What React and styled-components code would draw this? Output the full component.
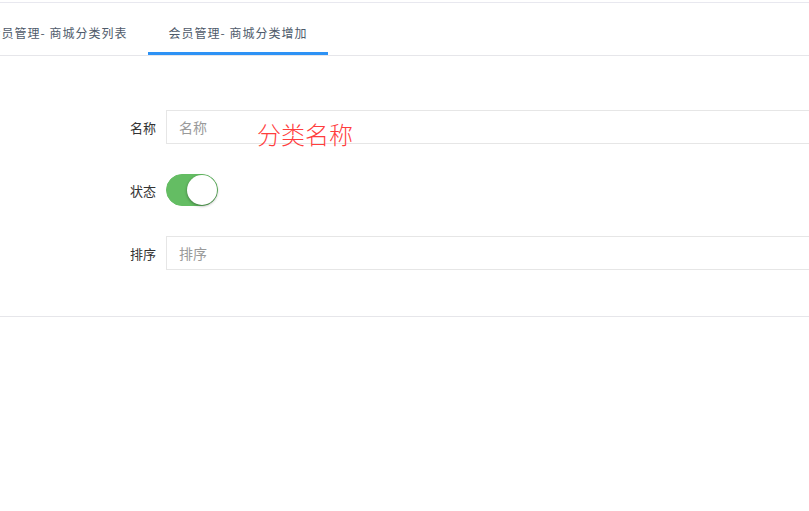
import React, { useState } from "react";
import styled, { createGlobalStyle } from "styled-components";

const Global = createGlobalStyle`
  html, body { margin: 0; padding: 0; background: #fff; overflow: hidden; }
  body { font-family: "Noto Sans CJK SC", "Noto Sans", sans-serif; }
  * { box-sizing: border-box; }
`;

const Page = styled.div`
  margin-top: 2px;
  border-top: 1px solid #e8e8ef;
  width: 809px;
`;

const TabBar = styled.div`
  display: flex;
  border-bottom: 1px solid #e6e6ea;
  margin-left: -32px;
`;

const Tab = styled.div`
  width: 180px;
  padding: 20px 0 9px;
  line-height: 20px;
  font-size: 12px;
  letter-spacing: 1px;
  color: #4e5a6a;
  text-align: center;
  white-space: nowrap;
  border-bottom: 3px solid ${(p) => (p.$active ? "#2d92f5" : "transparent")};
`;

const Panel = styled.div`
  display: flex;
  flex-direction: column;
  gap: 30px;
  padding: 54px 0 46px;
  border-bottom: 1px solid #e6e6ea;
`;

const Row = styled.div`
  position: relative;
  display: grid;
  grid-template-columns: 156px 1fr;
  column-gap: 10px;
  align-items: center;
`;

const Label = styled.label`
  text-align: right;
  font-size: 13px;
  color: #333;
`;

const Input = styled.input`
  width: calc(100% + 40px);
  height: 34px;
  border: 1px solid #e6e6e6;
  padding: 0 12px;
  font-size: 14px;
  font-family: "Noto Sans CJK SC", "Noto Sans", sans-serif;
  color: #333;
  outline: none;
  &::placeholder { color: #9a9a9a; }
`;

const Note = styled.span`
  position: absolute;
  left: 257px;
  top: 10px;
  font-size: 24px;
  line-height: 28px;
  color: #ff3d3d;
  font-weight: 300;
  pointer-events: none;
`;

const SwitchCell = styled.div`
  display: flex;
  align-items: center;
`;

const Switch = styled.button`
  position: relative;
  display: block;
  width: 52px;
  height: 32px;
  border-radius: 16px;
  border: 1px solid ${(p) => (p.$on ? "#64bd63" : "#dfdfdf")};
  background: ${(p) => (p.$on ? "#64bd63" : "#fff")};
  padding: 0;
  cursor: pointer;
`;

const Knob = styled.span`
  position: absolute;
  top: 0;
  left: ${(p) => (p.$on ? "20px" : "0")};
  width: 30px;
  height: 30px;
  border-radius: 50%;
  background: #fff;
  box-shadow: 0 1px 3px rgba(0, 0, 0, 0.4);
`;

export default function App() {
  const [on, setOn] = useState(true);
  return (
    <>
      <Global />
      <Page>
        <TabBar>
          <Tab>会员管理- 商城分类列表</Tab>
          <Tab $active>会员管理- 商城分类增加</Tab>
        </TabBar>
        <Panel>
          <Row>
            <Label>名称</Label>
            <Input placeholder="名称" />
            <Note>分类名称</Note>
          </Row>
          <Row>
            <Label>状态</Label>
            <SwitchCell>
              <Switch $on={on} onClick={() => setOn(!on)}>
                <Knob $on={on} />
              </Switch>
            </SwitchCell>
          </Row>
          <Row>
            <Label>排序</Label>
            <Input placeholder="排序" />
          </Row>
        </Panel>
      </Page>
    </>
  );
}
